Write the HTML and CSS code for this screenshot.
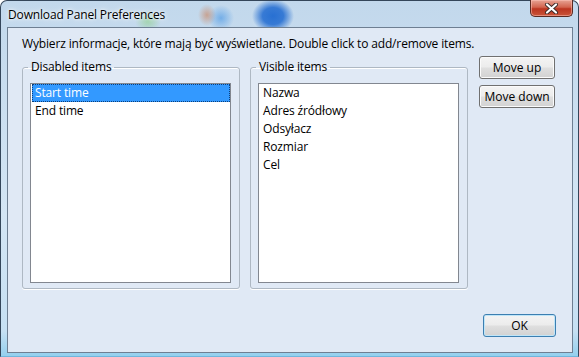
FILE: index.html
```html
<!DOCTYPE html>
<html lang="pl">
<head>
    <meta charset="UTF-8">
    <meta name="viewport" content="width=device-width, initial-scale=1.0">
    <title>Download Panel Preferences</title>
    <link rel="stylesheet" href="styles.css">
</head>
<body>
    <div class="window">
        <div class="titlebar">
            <span class="title">Download Panel Preferences</span>
            <button class="close" aria-label="Close">
                <svg width="15" height="11" viewBox="0 0 15 11">
                    <path d="M3 1.5 L12 9.5 M12 1.5 L3 9.5" stroke="#3a2a28" stroke-width="4" stroke-linecap="round"/>
                    <path d="M3 1.5 L12 9.5 M12 1.5 L3 9.5" stroke="#fff" stroke-width="2.2" stroke-linecap="round"/>
                </svg>
            </button>
        </div>
        <div class="client">
            <p class="hint">Wybierz informacje, które mają być wyświetlane. Double click to add/remove items.</p>
            <div class="main">
                <fieldset class="group">
                    <legend>Disabled items</legend>
                    <ul class="list">
                        <li class="selected">Start time</li>
                        <li>End time</li>
                    </ul>
                </fieldset>
                <fieldset class="group">
                    <legend>Visible items</legend>
                    <ul class="list">
                        <li>Nazwa</li>
                        <li>Adres źródłowy</li>
                        <li>Odsyłacz</li>
                        <li>Rozmiar</li>
                        <li>Cel</li>
                    </ul>
                </fieldset>
                <div class="side">
                    <button class="btn">Move up</button>
                    <button class="btn">Move down</button>
                </div>
            </div>
            <div class="footer">
                <button class="btn default">OK</button>
            </div>
        </div>
    </div>
</body>
</html>
```

FILE: styles.css
```css
body {
    margin: 0;
    font-family: "Open Sans", "Noto Sans", sans-serif;
    font-size: 12px;
    letter-spacing: -0.15px;
    color: #000;
    background: #fff;
}
.window {
    box-sizing: border-box;
    width: 579px;
    height: 357px;
    display: flex;
    flex-direction: column;
    padding: 0 5px 3px 6px;
    border: 1px solid #34465a;
    border-bottom-color: #6fb6dc;
    border-radius: 7px 7px 0 0;
    background:
        radial-gradient(ellipse 13px 11px at 147px 20px, rgba(130, 205, 120, 0.55) 0, rgba(130, 205, 120, 0) 100%),
        radial-gradient(ellipse 9px 11px at 206px 14px, rgba(200, 140, 110, 0.7) 0, rgba(200, 140, 110, 0) 100%),
        radial-gradient(ellipse 13px 13px at 220px 17px, rgba(90, 160, 230, 0.75) 0, rgba(90, 160, 230, 0) 100%),
        radial-gradient(ellipse 21px 17px at 272px 15px, rgba(40, 112, 210, 1) 0, rgba(40, 112, 210, 0.9) 50%, rgba(40, 112, 210, 0) 100%),
        linear-gradient(#c2d8ec, #d3e5f4 60%, #c6e0f3 93%, #94d0ee);
}
.titlebar {
    height: 26px;
    display: flex;
    align-items: center;
    padding-left: 1px;
}
.title {
    flex: 1;
    text-shadow: 0 0 6px #fff, 0 0 3px #fff;
}
.close {
    align-self: flex-start;
    width: 43px;
    height: 17px;
    margin-top: -1px;
    padding: 0;
    display: flex;
    align-items: center;
    justify-content: center;
    border: 1px solid #5a2a22;
    border-top: none;
    border-radius: 0 0 5px 5px;
    background: linear-gradient(#e7a394, #d2644f 45%, #bb3520 55%, #c9553a);
    box-shadow: inset 0 0 0 1px rgba(255, 200, 190, 0.5);
}
.client {
    flex: 1;
    display: flex;
    flex-direction: column;
    padding: 8px 16px 15px 14px;
    border: 1px solid #6e7f92;
    background: #e0e9f5;
}
.hint {
    margin: 0 0 4px;
    line-height: 16px;
    white-space: nowrap;
}
.main {
    display: flex;
    align-items: flex-start;
}
.group {
    box-sizing: border-box;
    width: 218px;
    margin: 3px 10px 0 0;
    padding: 8px 8px 5px 7px;
    border: 1px solid #aeb8c3;
    border-radius: 3px;
    box-shadow: 0 1px 0 #fff, inset 0 1px 0 #fff;
    min-inline-size: 0;
}
.group legend {
    padding: 0 3px;
    margin-left: -2px;
    line-height: 16px;
}
.list {
    box-sizing: border-box;
    height: 200px;
    margin: 0;
    padding: 0;
    list-style: none;
    border: 1px solid #828790;
    background: #fff;
}
.list li {
    height: 18px;
    line-height: 18px;
    padding-left: 4px;
    white-space: nowrap;
}
.list li.selected {
    margin: 0 0 0 1px;
    padding-left: 3px;
    background: #3399ff;
    color: #fff;
    outline: 1px dotted #0b3f7a;
    outline-offset: -1px;
}
.side {
    display: flex;
    flex-direction: column;
    gap: 6px;
    margin-left: 1px;
}
.btn {
    box-sizing: border-box;
    width: 76px;
    height: 23px;
    padding: 0;
    font: inherit;
    color: #000;
    border: 1px solid #707070;
    border-radius: 3px;
    background: linear-gradient(#f4f4f4, #ececec 48%, #dfdfdf 52%, #d2d2d2);
    box-shadow: inset 0 0 0 1px #fbfbfb;
}
.footer {
    margin-top: auto;
    display: flex;
    justify-content: flex-end;
}
.btn.default {
    width: 73px;
    border-color: #3c7fb1;
    box-shadow: inset 0 0 0 1px #bfe5f8;
}
```
